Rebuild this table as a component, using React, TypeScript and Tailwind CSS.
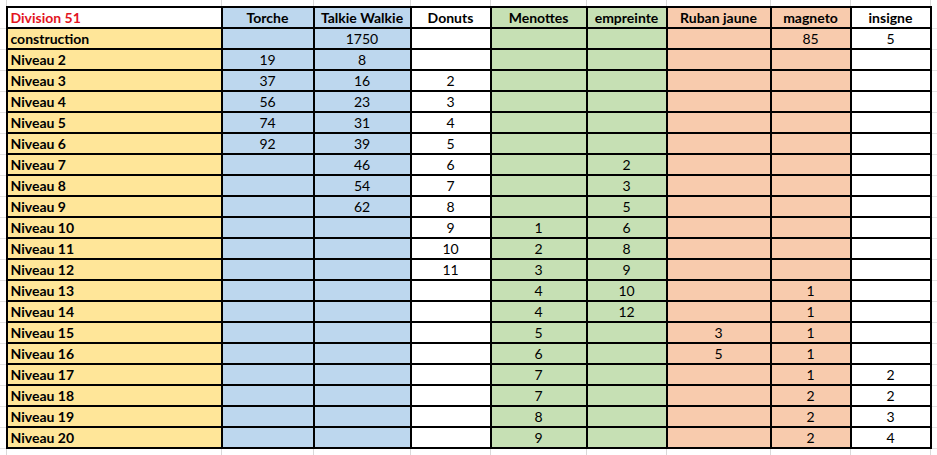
import React from "react";

const widths = [
  "w-[215px]",
  "w-[92px]",
  "w-[97px]",
  "w-[80px]",
  "w-[96px]",
  "w-[80px]",
  "w-[104px]",
  "w-[80px]",
  "w-[80px]",
];

// background colour per column (index 0 = label column)
const colBg = [
  "bg-[#ffe699]",
  "bg-[#bdd7ee]",
  "bg-[#bdd7ee]",
  "bg-white",
  "bg-[#c6e0b4]",
  "bg-[#c6e0b4]",
  "bg-[#f8cbad]",
  "bg-[#f8cbad]",
  "bg-white",
];

const headers = [
  "Torche",
  "Talkie Walkie",
  "Donuts",
  "Menottes",
  "empreinte",
  "Ruban jaune",
  "magneto",
  "insigne",
];

const rows: [string, string[]][] = [
  ["construction", ["", "1750", "", "", "", "", "85", "5"]],
  ["Niveau 2", ["19", "8", "", "", "", "", "", ""]],
  ["Niveau 3", ["37", "16", "2", "", "", "", "", ""]],
  ["Niveau 4", ["56", "23", "3", "", "", "", "", ""]],
  ["Niveau 5", ["74", "31", "4", "", "", "", "", ""]],
  ["Niveau 6", ["92", "39", "5", "", "", "", "", ""]],
  ["Niveau 7", ["", "46", "6", "", "2", "", "", ""]],
  ["Niveau 8", ["", "54", "7", "", "3", "", "", ""]],
  ["Niveau 9", ["", "62", "8", "", "5", "", "", ""]],
  ["Niveau 10", ["", "", "9", "1", "6", "", "", ""]],
  ["Niveau 11", ["", "", "10", "2", "8", "", "", ""]],
  ["Niveau 12", ["", "", "11", "3", "9", "", "", ""]],
  ["Niveau 13", ["", "", "", "4", "10", "", "1", ""]],
  ["Niveau 14", ["", "", "", "4", "12", "", "1", ""]],
  ["Niveau 15", ["", "", "", "5", "", "3", "1", ""]],
  ["Niveau 16", ["", "", "", "6", "", "5", "1", ""]],
  ["Niveau 17", ["", "", "", "7", "", "", "1", "2"]],
  ["Niveau 18", ["", "", "", "7", "", "", "2", "2"]],
  ["Niveau 19", ["", "", "", "8", "", "", "2", "3"]],
  ["Niveau 20", ["", "", "", "9", "", "", "2", "4"]],
];

function GridStrip() {
  return (
    <div className="flex h-[6px]">
      <div className="w-[7px] shrink-0 border-r border-[#d9d9d9]" />
      {widths.map((w, i) => (
        <div key={i} className={`${w} shrink-0 border-r border-[#d9d9d9]`} />
      ))}
      <div className="flex-1" />
    </div>
  );
}

function SideStrip() {
  return (
    <div className="flex w-[6px] flex-col">
      <div className="h-[2px]" />
      {Array.from({ length: 21 }).map((_, i) => (
        <div key={i} className="h-[21px] border-b border-[#e3e3e3]" />
      ))}
    </div>
  );
}

export default function App() {
  return (
    <main className="h-[455px] w-[937px] overflow-hidden bg-white font-['Lato',sans-serif] text-[14px] leading-[19px] text-black">
      <GridStrip />
      <div className="flex">
        <SideStrip />
        <div className="border-l-2 border-t-2 border-black">
          <div className="flex">
            <div className={`${widths[0]} h-[21px] border-b-2 border-r-2 border-black bg-white pl-[3px] font-bold text-[#e3141e]`}>
              Division 51
            </div>
            {headers.map((h, i) => (
              <div
                key={h}
                className={`${widths[i + 1]} ${colBg[i + 1]} h-[21px] border-b-2 border-r-2 border-black text-center font-bold`}
              >
                {h}
              </div>
            ))}
          </div>
          {rows.map(([label, cells]) => (
            <div key={label} className="flex">
              <div className={`${widths[0]} ${colBg[0]} h-[21px] border-b-2 border-r-2 border-black pl-[3px] font-bold`}>
                {label}
              </div>
              {cells.map((c, i) => (
                <div
                  key={i}
                  className={`${widths[i + 1]} ${colBg[i + 1]} h-[21px] border-b-2 border-r-2 border-black text-center`}
                >
                  {c}
                </div>
              ))}
            </div>
          ))}
        </div>
        <SideStrip />
      </div>
      <GridStrip />
    </main>
  );
}
